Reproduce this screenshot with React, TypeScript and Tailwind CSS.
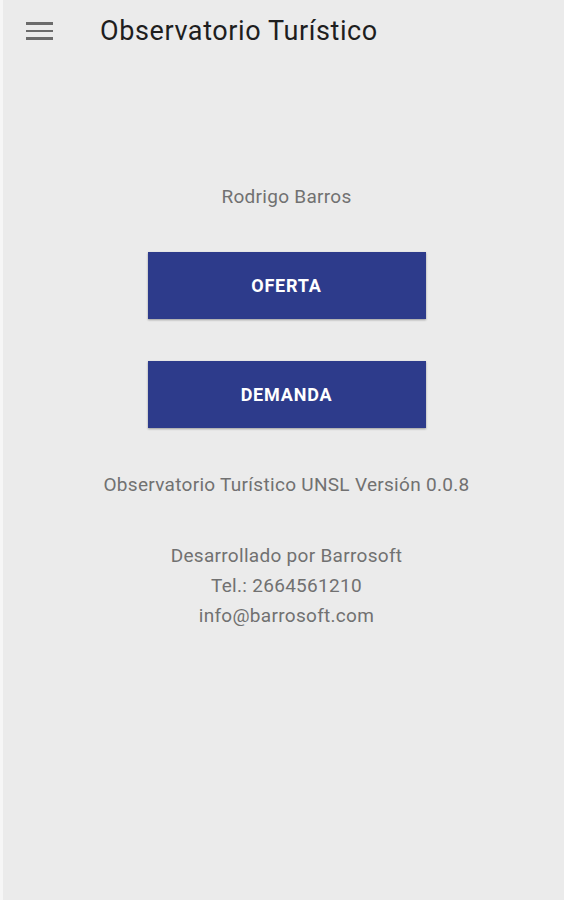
import React from "react";

export default function App() {
  return (
    <div
      className="w-[564px] h-[900px] bg-[#ebebeb] border-l-[3px] border-[#f6f6f6] overflow-hidden"
      style={{ fontFamily: "Roboto, 'Noto Sans', sans-serif" }}
    >
      <header className="h-[62px] flex items-center">
        <div className="ml-[23px] w-[27px] flex flex-col gap-[5px]">
          <div className="h-[2.5px] bg-[#6b6b6b]" />
          <div className="h-[2.5px] bg-[#6b6b6b]" />
          <div className="h-[2.5px] bg-[#6b6b6b]" />
        </div>
        <h1 className="ml-[47px] text-[27px] leading-none text-[#1e1e1e] font-normal tracking-[0.6px]">
          Observatorio Turístico
        </h1>
      </header>

      <main className="flex flex-col items-center pl-[6px] text-[19px] tracking-[0.3px] text-[#717171]">
        <p className="mt-[123px] leading-[24px]">Rodrigo Barros</p>

        <button className="mt-[43px] w-[278px] h-[67px] bg-[#2d3b8b] text-white text-[18px] font-bold tracking-[0.8px] shadow-[0_1px_2px_rgba(0,0,0,0.35)]">
          OFERTA
        </button>

        <button className="mt-[42px] w-[278px] h-[67px] bg-[#2d3b8b] text-white text-[18px] font-bold tracking-[0.8px] shadow-[0_1px_2px_rgba(0,0,0,0.35)]">
          DEMANDA
        </button>

        <p className="mt-[45px] leading-[24px]">Observatorio Turístico UNSL Versión 0.0.8</p>

        <div className="mt-[44px] flex flex-col items-center leading-[30px]">
          <p>Desarrollado por Barrosoft</p>
          <p>Tel.: 2664561210</p>
          <p>info@barrosoft.com</p>
        </div>
      </main>
    </div>
  );
}
